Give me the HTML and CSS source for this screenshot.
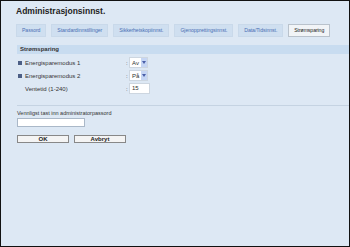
FILE: index.html
```html
<!DOCTYPE html>
<html lang="no">
<head>
    <meta charset="UTF-8">
    <title>Administrasjonsinnst.</title>
    <link rel="stylesheet" href="styles.css">
</head>
<body>
    <div class="frame">
        <h1 class="title">Administrasjonsinnst.</h1>
        <div class="tabs">
            <span class="tab">Passord</span>
            <span class="tab">Standardinnstillinger</span>
            <span class="tab">Sikkerhetskopiinnst.</span>
            <span class="tab">Gjenopprettingsinnst.</span>
            <span class="tab">Data/Tidsinnst.</span>
            <span class="tab active">Strømsparing</span>
        </div>

        <div class="section-head">Strømsparing</div>

        <div class="rows">
            <div class="row">
                <span class="label"><i class="bullet"></i>Energisparemodus 1</span>
                <span class="colon">:</span>
                <span class="select">Av<b class="arrow"></b></span>
            </div>
            <div class="row">
                <span class="label"><i class="bullet"></i>Energisparemodus 2</span>
                <span class="colon">:</span>
                <span class="select">På<b class="arrow"></b></span>
            </div>
            <div class="row">
                <span class="label plain">Ventetid (1-240)</span>
                <span class="colon">:</span>
                <span class="field">15</span>
            </div>
        </div>

        <hr class="divider">

        <div class="login">
            <p class="hint">Vennligst tast inn administratorpassord</p>
            <span class="password"></span>
            <div class="buttons">
                <button class="btn">OK</button>
                <button class="btn">Avbryt</button>
            </div>
        </div>
    </div>
</body>
</html>
```

FILE: styles.css
```css
body {
    margin: 0;
    font-family: "Liberation Sans", Arial, sans-serif;
    color: #333;
}

.frame {
    width: 348px;
    height: 245px;
    border: 1px solid #111;
    background-color: #dde8f4;
    overflow: hidden;
}

.title {
    margin: 5px 0 0 15px;
    font-size: 8.5px;
    font-weight: bold;
    color: #222;
    line-height: 11px;
}

.tabs {
    display: flex;
    gap: 5px;
    margin: 7px 0 0 15px;
}

.tab {
    height: 11px;
    padding: 0 5px;
    border: 1px solid #c9d9ea;
    background-color: #cfdff0;
    color: #4a6fb5;
    font-size: 5.2px;
    letter-spacing: -0.1px;
    line-height: 11px;
}

.tab.active {
    background-color: #f1f4f7;
    border-color: #b9c2cc;
    color: #222;
}

.section-head {
    margin: 8px 0 0 16px;
    height: 9px;
    padding-left: 3px;
    background-color: #c8dcf0;
    font-size: 6px;
    font-weight: bold;
    line-height: 9px;
    color: #333;
}

.rows {
    margin: 2px 0 0 16px;
}

.row {
    display: flex;
    align-items: center;
    height: 13px;
    font-size: 6px;
}

.label {
    width: 109px;
    display: flex;
    align-items: center;
}

.label.plain {
    padding-left: 8px;
    width: 101px;
}

.bullet {
    width: 4px;
    height: 4px;
    margin: 0 3px 0 1px;
    background-color: #4c5f86;
}

.colon {
    width: 3px;
}

.select {
    display: flex;
    align-items: center;
    height: 9px;
    width: 15px;
    padding-left: 2px;
    background-color: #fff;
    border: 1px solid #cdd6e0;
    justify-content: space-between;
}

.arrow {
    width: 6px;
    height: 9px;
    background-color: #c6d6f4;
    position: relative;
}

.arrow::after {
    content: "";
    position: absolute;
    left: 1px;
    top: 3px;
    border-left: 2px solid transparent;
    border-right: 2px solid transparent;
    border-top: 3px solid #4a5fa8;
}

.field {
    height: 9px;
    width: 17px;
    padding-left: 2px;
    background-color: #fff;
    border: 1px solid #cdd6e0;
    line-height: 9px;
}

.divider {
    margin: 10px 0 0 16px;
    border: none;
    border-top: 1px solid #c5d3e2;
}

.login {
    margin-left: 16px;
}

.hint {
    margin: 4px 0 0;
    font-size: 5.5px;
    line-height: 7px;
}

.password {
    display: block;
    width: 66px;
    height: 7px;
    margin-top: 1px;
    background-color: #fff;
    border: 1px solid #aab8c8;
}

.buttons {
    display: flex;
    gap: 5px;
    margin-top: 8px;
}

.btn {
    width: 52px;
    height: 8px;
    padding: 0;
    border: 1px solid #888;
    background-color: #f4f4f4;
    font-family: "Liberation Sans", Arial, sans-serif;
    font-size: 6px;
    font-weight: bold;
    line-height: 6px;
    color: #222;
}
```
